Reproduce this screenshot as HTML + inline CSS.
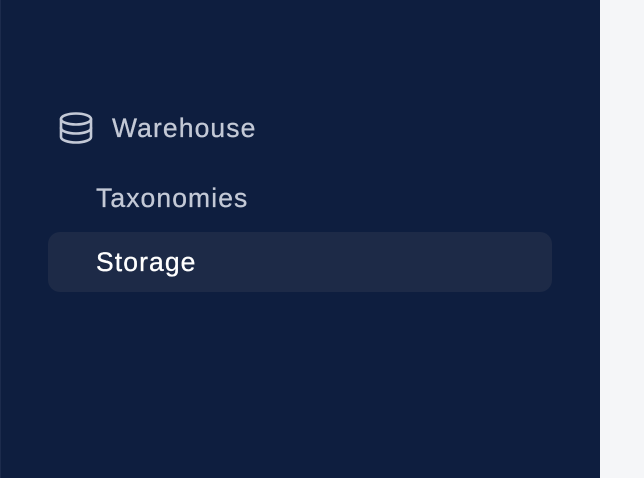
<!DOCTYPE html>
<html><head><style>
html,body{margin:0;padding:0}
body{width:644px;height:478px;position:relative;background:#f5f6f8;overflow:hidden;font-family:"Liberation Sans",sans-serif}
.sb{position:absolute;left:0;top:0;width:600px;height:478px;background:#0e1e3f;border-left:1px solid #1c2b4c;box-sizing:border-box}
.t{position:absolute;white-space:nowrap;font-size:26.5px;letter-spacing:1.1px;-webkit-text-stroke:0.3px currentColor}
.act{position:absolute;left:47px;top:232px;width:504px;height:60px;border-radius:12px;background:#1d2a47}
</style></head><body>
<div class="sb">
<svg style="position:absolute;left:57px;top:111px" width="36" height="34" viewBox="0 0 36 34" fill="none" stroke="#c3c9d6" stroke-width="2.6" stroke-linecap="round">
<ellipse cx="18" cy="8" rx="15" ry="5.5"/>
<path d="M3 8v18c0 3 6.7 5.5 15 5.5s15-2.5 15-5.5V8"/>
<path d="M3 17c0 3 6.7 5.5 15 5.5s15-2.5 15-5.5"/>
</svg>
<div class="t" style="left:111px;top:113px;color:#c3c9d6">Warehouse</div>
<div class="t" style="left:95px;top:183px;color:#c3c9d6">Taxonomies</div>
<div class="act"></div>
<div class="t" style="left:95px;top:247px;color:#ffffff">Storage</div>
</div>
</body></html>
